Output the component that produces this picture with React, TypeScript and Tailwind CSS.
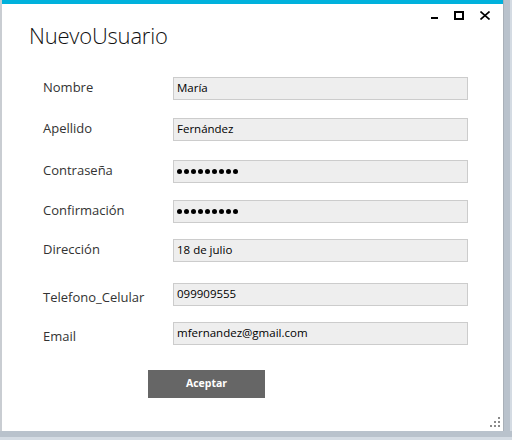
import React from "react";

const rows: { label: string; value: string; mt: string; lt: string; pw?: boolean }[] = [
  { label: "Nombre", value: "María", mt: "mt-[0px]", lt: "-translate-y-[1px]" },
  { label: "Apellido", value: "Fernández", mt: "mt-[18px]", lt: "-translate-y-[1px]" },
  { label: "Contraseña", value: "", mt: "mt-[19px]", lt: "-translate-y-[1px]", pw: true },
  { label: "Confirmación", value: "", mt: "mt-[17px]", lt: "-translate-y-[1px]", pw: true },
  { label: "Dirección", value: "18 de julio", mt: "mt-[16px]", lt: "-translate-y-[1px]" },
  { label: "Telefono_Celular", value: "099909555", mt: "mt-[21px]", lt: "translate-y-[3px]" },
  { label: "Email", value: "mfernandez@gmail.com", mt: "mt-[16px]", lt: "translate-y-[3px]" },
];

export default function App() {
  return (
    <div className="w-[512px] h-[440px] bg-[#b9c2cc] flex flex-col overflow-hidden" style={{ fontFamily: '"Open Sans", "Noto Sans", sans-serif' }}>
      <div className="flex">
        <div className="w-[504px] h-[431px] bg-white border-l-2 border-[#c9cdd2] border-r border-r-[#a9b0b8] flex flex-col relative">
          <div className="h-[4px] bg-[#00b1dc]" />
          <div className="flex justify-end items-start h-[15px] pr-[13px] pt-[7px] gap-[16px]">
            <div className="w-[7px] h-[2px] bg-black mt-[6px]" />
            <div className="w-[10px] h-[9px] border-2 border-black border-t-[2px]" />
            <svg width="10" height="9" viewBox="0 0 10 9">
              <path d="M0.5 0.5 L9.5 8.5 M9.5 0.5 L0.5 8.5" stroke="#000" strokeWidth="1.6" />
            </svg>
          </div>
          <div className="pl-[27px] mt-[3px] text-[22px] font-light text-[#111] leading-[26px] tracking-[-0.2px]">NuevoUsuario</div>
          <div className="flex flex-col mt-[29px]">
            {rows.map((r) => (
              <div key={r.label} className={`flex items-center h-[23px] ${r.mt}`}>
                <div className={`w-[171px] shrink-0 pl-[41px] text-[13px] text-[#333] whitespace-nowrap ${r.lt}`}>{r.label}</div>
                <div className="w-[295px] h-[23px] bg-[#eeeeee] border border-[#cccccc] flex items-center pl-[3px]">
                  {r.pw ? (
                    <div className="flex gap-[2px] items-center">
                      {Array.from({ length: 9 }).map((_, i) => (
                        <div key={i} className="w-[5px] h-[5px] rounded-full bg-black" />
                      ))}
                    </div>
                  ) : (
                    <span className="text-[11.5px] text-black leading-none -translate-y-[1px]">{r.value}</span>
                  )}
                </div>
              </div>
            ))}
          </div>
          <div className="pl-[146px] mt-[25px]">
            <div className="w-[117px] h-[28px] bg-[#666666] flex items-center justify-center text-white text-[10.5px] font-bold">Aceptar</div>
          </div>
          <div className="absolute right-[3px] bottom-[4px] grid grid-cols-3 gap-[2px]">
            {[0, 0, 1, 0, 1, 1, 1, 1, 1].map((v, i) => (
              <div key={i} className={`w-[2px] h-[2px] ${v ? "bg-[#8a8a8a]" : "bg-transparent"}`} />
            ))}
          </div>
        </div>
        <div className="flex-1 h-[431px] bg-[#b9c2cc] flex justify-end">
          <div className="w-[2px] h-full bg-[#d4dbe3]" />
        </div>
      </div>
      <div className="h-[6px] bg-[#b9c2cc]" />
      <div className="flex-1 bg-[#d4dbe3]" />
    </div>
  );
}
